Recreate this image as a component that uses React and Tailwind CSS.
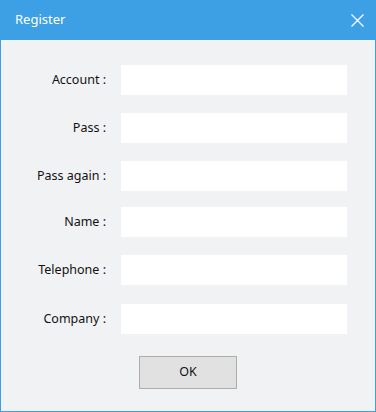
import React from "react";

const rows = [
  { label: "Account :", mt: "mt-[25px]" },
  { label: "Pass :", mt: "mt-[18px]" },
  { label: "Pass again :", mt: "mt-[18px]" },
  { label: "Name :", mt: "mt-[16px]" },
  { label: "Telephone :", mt: "mt-[18px]" },
  { label: "Company :", mt: "mt-[19px]" },
];

export default function App() {
  return (
    <div
      className="w-[376px] h-[412px] flex flex-col bg-[#3d9fe4] px-px pb-px"
      style={{ fontFamily: '"Noto Sans", "Open Sans", sans-serif' }}
    >
      <div className="h-[40px] flex items-center justify-between pl-[14px] pr-[9px] shrink-0">
        <span className="text-white text-[13px]">Register</span>
        <svg width="15" height="15" viewBox="0 0 15 15" className="mr-px">
          <path d="M1.5 1.5L13.5 13.5M13.5 1.5L1.5 13.5" stroke="white" strokeWidth="1.3" />
        </svg>
      </div>
      <div className="flex-1 bg-[#f1f2f4] flex flex-col">
        {rows.map((r) => (
          <div key={r.label} className={`flex items-center ${r.mt}`}>
            <div className="w-[106px] text-right text-[12.5px] text-[#111] pr-px">{r.label}</div>
            <div className="ml-[14px] w-[226px] h-[30px] bg-white" />
          </div>
        ))}
        <div className="flex mt-[22px] pl-[138px]">
          <button className="w-[98px] h-[33px] bg-[#e1e1e1] border border-[#adadad] text-[12.5px] text-[#111]">
            OK
          </button>
        </div>
      </div>
    </div>
  );
}
